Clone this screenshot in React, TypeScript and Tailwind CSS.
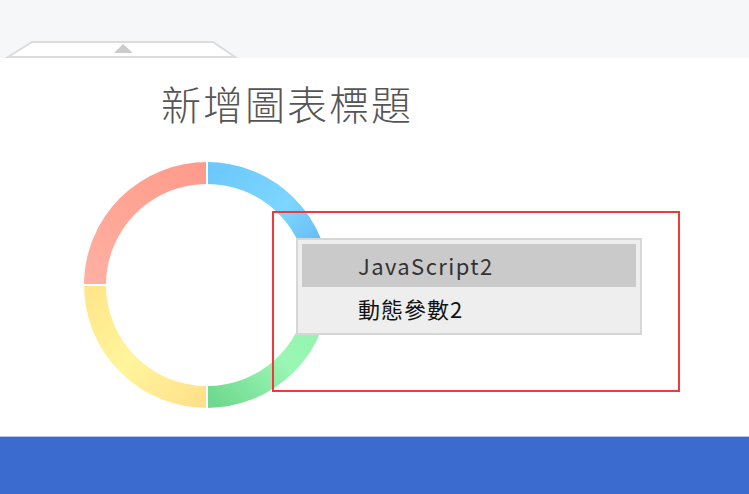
export default function App() {
  const font = { fontFamily: '"Noto Sans CJK TC", "Noto Sans", sans-serif' };

  return (
    <div className="w-[749px] h-[494px] flex flex-col overflow-hidden bg-white" style={font}>
      {/* top bar with collapse tab */}
      <div className="h-[58px] bg-[#f6f7f9] flex items-end shrink-0">
        <svg width="240" height="18" viewBox="0 40 240 18" className="block">
          <polygon points="8,57 32,42 213,42 235,57" fill="#ffffff" stroke="#dcdcdc" strokeWidth="2" />
          <polygon points="123,44 114,53 133,53" fill="#cccccc" />
        </svg>
      </div>

      {/* chart area */}
      <div className="relative h-[378px] shrink-0 bg-white">
        <div className="pl-[161px] pt-[20px] h-[80px] text-[40px] leading-[50px] tracking-[2px] text-[#555555] font-light">
          新增圖表標題
        </div>

        <div className="pl-[82px] pt-[22px]">
          <svg width="250" height="250" viewBox="0 0 250 250">
            <defs>
              <linearGradient id="gBlue" x1="0" y1="0" x2="1" y2="1">
                <stop offset="0" stopColor="#6cc8fb" />
                <stop offset="0.5" stopColor="#7dd6ff" />
                <stop offset="1" stopColor="#58aceb" />
              </linearGradient>
              <linearGradient id="gGreen" x1="1" y1="0" x2="0" y2="1">
                <stop offset="0" stopColor="#8ff3ab" />
                <stop offset="0.5" stopColor="#9af6b4" />
                <stop offset="1" stopColor="#6ed88e" />
              </linearGradient>
              <linearGradient id="gYellow" x1="0" y1="0" x2="1" y2="1">
                <stop offset="0" stopColor="#ffe68a" />
                <stop offset="0.5" stopColor="#fff59c" />
                <stop offset="1" stopColor="#ffe08a" />
              </linearGradient>
              <linearGradient id="gRed" x1="1" y1="0" x2="0" y2="1">
                <stop offset="0" stopColor="#ff9b8c" />
                <stop offset="0.5" stopColor="#ffa595" />
                <stop offset="1" stopColor="#ffb0a2" />
              </linearGradient>
            </defs>
            <g fill="none" strokeWidth="22">
              <path d="M125 13 A112 112 0 0 1 237 125" stroke="url(#gBlue)" />
              <path d="M237 125 A112 112 0 0 1 125 237" stroke="url(#gGreen)" />
              <path d="M125 237 A112 112 0 0 1 13 125" stroke="url(#gYellow)" />
              <path d="M13 125 A112 112 0 0 1 125 13" stroke="url(#gRed)" />
            </g>
            <g stroke="#ffffff" strokeWidth="2">
              <line x1="125" y1="0" x2="125" y2="30" />
              <line x1="125" y1="220" x2="125" y2="250" />
              <line x1="0" y1="125" x2="30" y2="125" />
              <line x1="220" y1="125" x2="250" y2="125" />
            </g>
          </svg>
        </div>

        {/* highlight frame */}
        <div className="absolute left-[272px] top-[153px] w-[408px] h-[181px] border-2 border-[#f03a3a]" />

        {/* context menu */}
        <div className="absolute left-[296px] top-[180px] w-[346px] border-2 border-[#d6d6d6] bg-[#eeeeee] pt-[4px] px-[4px] pb-[3px]">
          <div className="h-[43px] bg-[#cacaca] pl-[56px] flex items-center text-[22px] tracking-[1.4px] text-[#333333]">
            JavaScript2
          </div>
          <div className="h-[43px] pl-[56px] flex items-center text-[22px] tracking-[1px] text-[#111111]">
            動態參數2
          </div>
        </div>
      </div>

      {/* bottom bar */}
      <div className="flex-1 bg-[#3c6bd0] border-t border-[#b6c7ee]" />
    </div>
  );
}
